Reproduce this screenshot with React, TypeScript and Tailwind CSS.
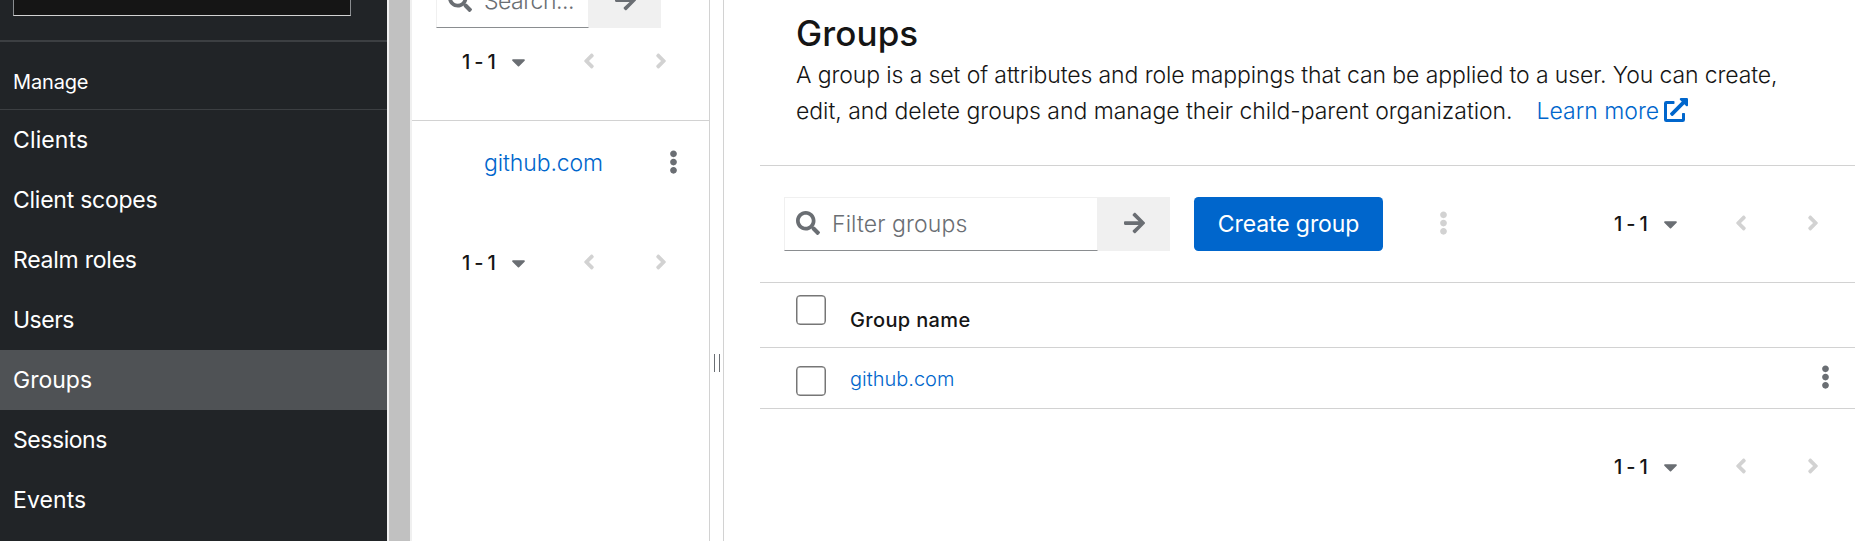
import React from 'react';
import {
  FaAngleLeft,
  FaAngleRight,
  FaArrowRight,
  FaCaretDown,
  FaEllipsisV,
  FaExternalLinkAlt,
  FaSearch,
} from 'react-icons/fa';

const navItems = [
  { label: 'Clients', tracking: 'tracking-[0.13px]' },
  { label: 'Client scopes', tracking: 'tracking-[-0.25px]' },
  { label: 'Realm roles', tracking: 'tracking-[-0.24px]' },
  { label: 'Users', tracking: 'tracking-[-0.5px]' },
  { label: 'Groups', tracking: 'tracking-normal', current: true },
  { label: 'Sessions', tracking: 'tracking-[-0.45px]' },
  { label: 'Events', tracking: 'tracking-[0.1px]' },
];

function Sidebar() {
  return (
    <nav className="flex w-[387px] shrink-0 flex-col bg-[#212427] text-white">
      <div className="h-[42px] shrink-0 border-b-2 border-[#3c3f42] pl-[13px]">
        <div className="h-4 w-[338px] border-x border-b border-x-[#8a8d90] border-b-[#d2d2d2] bg-[#151515]" />
      </div>
      <h2 className="h-17 shrink-0 border-b border-[#3c3f42] pt-7 pl-[13px] text-[20px] leading-6 tracking-[-0.15px]">
        Manage
      </h2>
      <ul>
        {navItems.map((item) => (
          <li key={item.label} className={item.current ? 'bg-[#4f5255]' : ''}>
            <a
              href="#"
              className={`flex h-15 items-center pl-[13px] text-[23px] leading-9 ${item.tracking}`}
            >
              {item.label}
            </a>
          </li>
        ))}
      </ul>
    </nav>
  );
}

function Pagination() {
  return (
    <div className="flex h-6 items-center">
      <button className="flex items-center">
        <span className="w-[50px] text-left text-[20px] leading-6 font-medium tracking-[-0.65px] text-[#151515]">
          1 - 1
        </span>
        <FaCaretDown className="-ml-px h-[22px] w-[15px] text-[#6a6e73]" />
      </button>
      <FaAngleLeft className="mb-0.5 ml-[57px] h-6 w-3 text-[#d2d2d2]" />
      <FaAngleRight className="mb-0.5 ml-15 h-6 w-3 text-[#d2d2d2]" />
    </div>
  );
}

function SearchBox({
  placeholder,
  field,
  tracking,
}: {
  placeholder: string;
  field: string;
  tracking: string;
}) {
  return (
    <div className="flex h-[54px] shrink-0">
      <div
        className={`flex items-center border border-[#f0f0f0] border-b-[#8a8d90] pl-[11px] ${field}`}
      >
        <FaSearch className="mb-0.5 size-6 shrink-0 text-[#6a6e73]" />
        <span className={`ml-3 text-[23px] leading-9 font-light text-[#6a6e73] ${tracking}`}>
          {placeholder}
        </span>
      </div>
      <button className="flex w-18 items-center justify-center bg-[#f0f0f0]">
        <FaArrowRight className="mb-0.5 h-6 w-[21px] text-[#6a6e73]" />
      </button>
    </div>
  );
}

function Kebab({ className }: { className: string }) {
  return <FaEllipsisV className={`h-6 w-[9px] shrink-0 ${className}`} />;
}

function Checkbox({ className }: { className: string }) {
  return (
    <span
      className={`size-[30px] shrink-0 rounded-[4px] border border-[#767676] shadow-[inset_0_0_0_0.5px_#767676] ${className}`}
    />
  );
}

function GroupTree() {
  return (
    <section className="flex w-[298px] shrink-0 flex-col border-r border-[#d2d2d2]">
      <div className="flex h-[121px] shrink-0 flex-col border-b border-[#d2d2d2]">
        <div className="-mt-[26px] pl-6">
          <SearchBox placeholder="Search..." field="w-[153px]" tracking="tracking-[-0.5px]" />
        </div>
        <div className="mt-[22px] pl-[50px]">
          <Pagination />
        </div>
      </div>
      <div className="mt-6 flex h-9 items-center pl-[72px]">
        <a
          href="#"
          className="w-[184.5px] text-[23px] leading-9 font-light tracking-[-0.1px] text-[#0066cc]"
        >
          github.com
        </a>
        <Kebab className="mb-0.5 text-[#6a6e73]" />
      </div>
      <div className="mt-[70px] pl-[50px]">
        <Pagination />
      </div>
    </section>
  );
}

function GroupsPage() {
  return (
    <main className="flex min-w-0 flex-1 flex-col border-l border-[#d2d2d2] pl-9 text-[#151515]">
      <header className="h-[166px] shrink-0 border-b border-[#d2d2d2] pt-3 pl-9">
        <h1 className="text-[35px] leading-[42px] font-medium tracking-[0.1px]">Groups</h1>
        <div className="mt-[3px] text-[23px] leading-9 font-light">
          <p className="tracking-[-0.11px] whitespace-nowrap">
            A group is a set of attributes and role mappings that can be applied to a user. You can create,
          </p>
          <div className="flex">
            <p className="w-[740.5px] tracking-[-0.04px] whitespace-nowrap">
              edit, and delete groups and manage their child-parent organization.
            </p>
            <a href="#" className="flex text-[#0066cc]">
              <span className="w-[127.5px]">Learn more</span>
              <FaExternalLinkAlt className="mt-[5px] size-6" />
            </a>
          </div>
        </div>
      </header>

      <div className="flex h-[117px] shrink-0 items-center border-b border-[#d2d2d2] pl-6">
        <SearchBox placeholder="Filter groups" field="w-[314px]" tracking="tracking-[0.1px]" />
        <button className="ml-6 h-[54px] w-[189px] rounded-[4.5px] bg-[#0066cc] text-[23px] leading-9 tracking-[-0.1px] text-white">
          Create group
        </button>
        <Kebab className="mb-0.5 ml-[55.5px] text-[#d2d2d2]" />
        <div className="ml-[166.5px]">
          <Pagination />
        </div>
      </div>

      <div className="flex h-[65px] shrink-0 border-b border-[#d2d2d2] pl-9">
        <Checkbox className="mt-3" />
        <span className="mt-[25px] ml-6 text-[20px] leading-6 font-medium tracking-[0.35px]">
          Group name
        </span>
      </div>
      <div className="flex h-[61px] shrink-0 border-b border-[#d2d2d2] pr-[25.5px] pl-9">
        <Checkbox className="mt-[18px]" />
        <a href="#" className="mt-[19px] ml-6 flex-1 text-[20px] leading-6 font-light text-[#0066cc]">
          github.com
        </a>
        <Kebab className="mt-[17px] text-[#6a6e73]" />
      </div>
      <div className="mt-[46px] pl-[854px]">
        <Pagination />
      </div>
    </main>
  );
}

export default function App() {
  return (
    <div className="flex h-[541px] w-[1855px] overflow-hidden bg-white font-['Inter',sans-serif]">
      <Sidebar />
      <div className="w-[25px] shrink-0 border-x-2 border-[#f0f0f0] bg-[#c1c1c1]" />
      <GroupTree />
      <div className="flex w-[13px] shrink-0 pt-[354px] pl-1">
        <div className="h-[18px] w-1.5 border-x border-[#6a6e73]" />
      </div>
      <GroupsPage />
    </div>
  );
}
